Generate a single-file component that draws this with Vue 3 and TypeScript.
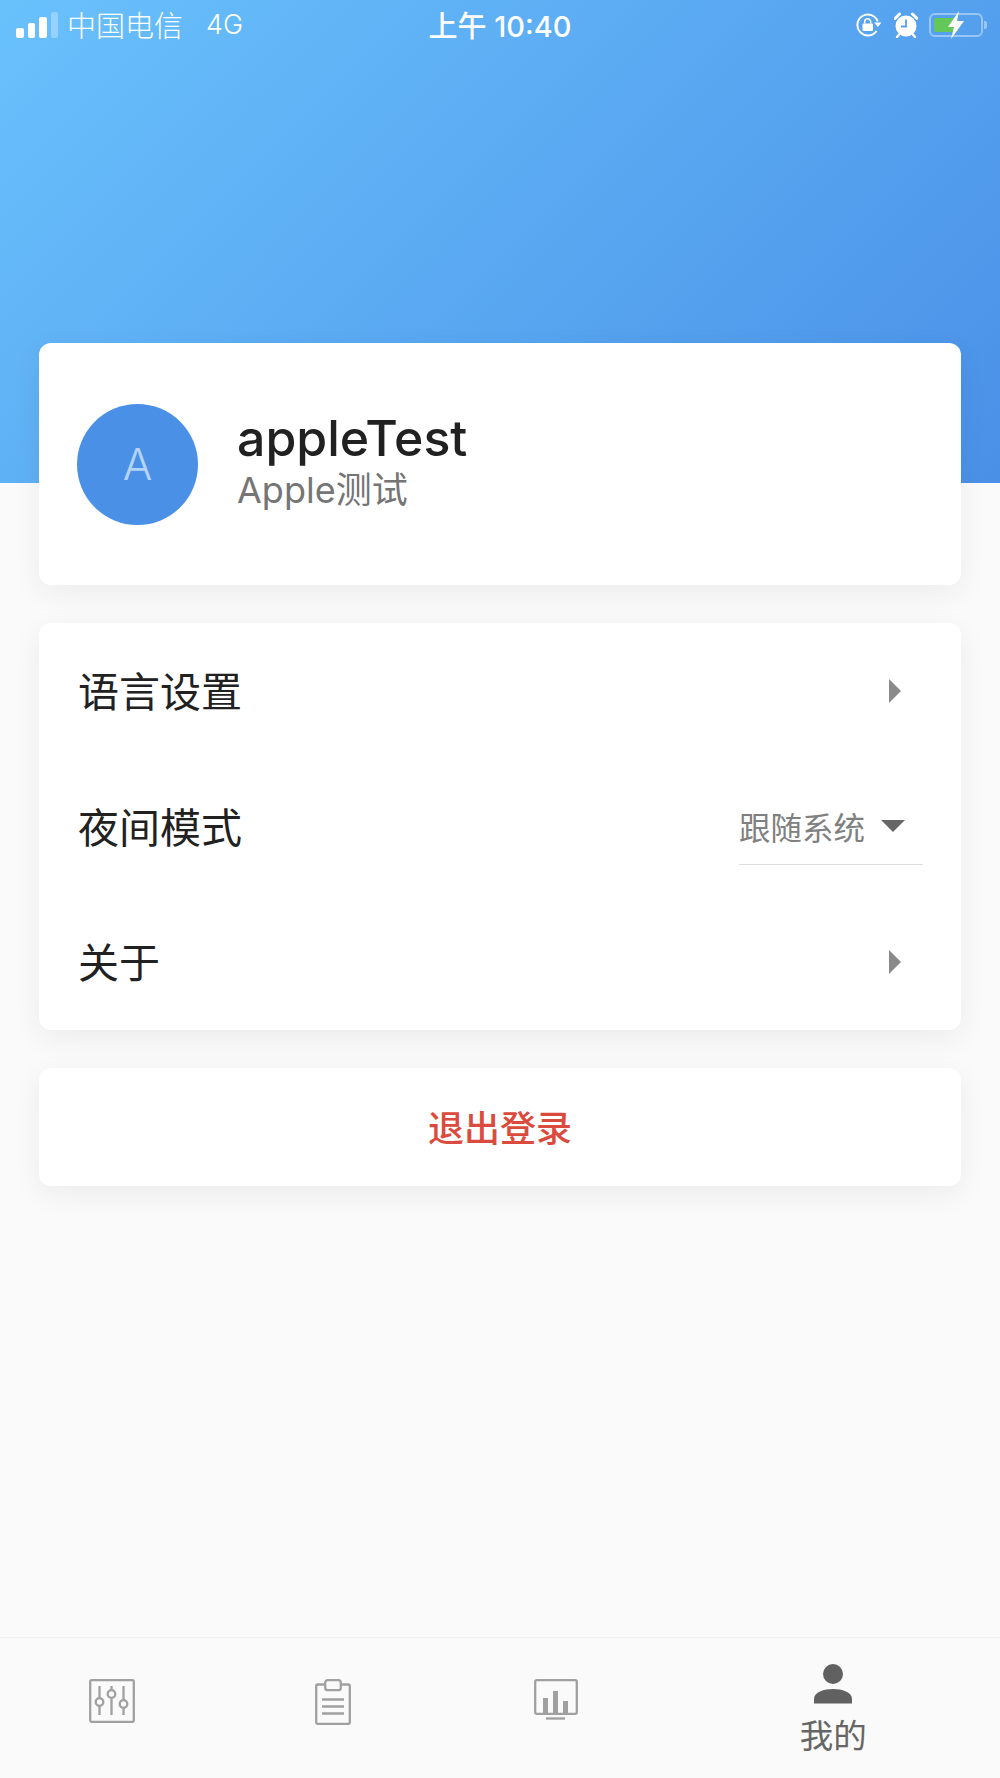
<template>
  <div class="page">
    <header class="hero">
      <div class="status-bar">
        <div class="status-left">
          <div class="signal">
            <i v-for="(h, idx) in signalBars" :key="h" :class="{ off: idx === 3 }" :style="{ height: h + 'px' }"></i>
          </div>
          <span class="carrier">中国电信</span>
          <span class="net">4G</span>
        </div>
        <div class="clock">上午 10:40</div>
        <div class="status-right">
          <svg class="ic-lock" width="26" height="24" viewBox="0 0 26 24">
            <path d="M20.500 18A10.500 10.500 0 1 1 21.800 8.500" fill="none" stroke="#fff" stroke-width="2" />
            <path d="M18 9.500h7.500l-3.700 4.500z" fill="#fff" />
            <rect x="6.500" y="10.500" width="10.500" height="7.500" rx="1" fill="#fff" />
            <path d="M8.700 10.500V8.800a3 3 0 0 1 6 0v1.700" fill="none" stroke="#fff" stroke-width="1.500" />
          </svg>
          <svg class="ic-alarm" width="24" height="26" viewBox="0 0 24 26">
            <circle cx="12" cy="14" r="10.500" fill="#fff" />
            <path d="M1 6.500L5.500 2M23 6.500L18.500 2" stroke="#fff" stroke-width="3" stroke-linecap="round" />
            <path d="M5 22.500l-2 2.500M19 22.500l2 2.500" stroke="#fff" stroke-width="2.400" stroke-linecap="round" />
            <path d="M12 7.500V14.500H7" fill="none" stroke="#5a9fec" stroke-width="1.800" />
          </svg>
          <div class="battery">
            <div class="battery-body"><div class="battery-level"></div></div>
            <div class="battery-nub"></div>
            <svg class="bolt" width="20" height="30" viewBox="0 0 20 30">
              <path d="M13 1L2 17h6l-3 12L18 11h-7z" fill="#fff" />
            </svg>
          </div>
        </div>
      </div>
    </header>

    <main class="content">
      <section class="card profile">
        <div class="avatar">A</div>
        <div class="profile-text">
          <div class="name">appleTest</div>
          <div class="subname">Apple测试</div>
        </div>
      </section>

      <section class="card settings">
        <div class="row">
          <span>语言设置</span>
          <span class="arrow-right"></span>
        </div>
        <div class="row">
          <span>夜间模式</span>
          <div class="select">
            <span>跟随系统</span>
            <span class="caret"></span>
          </div>
        </div>
        <div class="row">
          <span>关于</span>
          <span class="arrow-right"></span>
        </div>
      </section>

      <section class="card logout">退出登录</section>
    </main>

    <nav class="tabbar">
      <div class="tab">
        <svg class="ic-sliders" width="46" height="44" viewBox="0 0 46 44" fill="none" stroke="#a0a0a0" stroke-width="2.300">
          <rect x="1.200" y="1.200" width="43.600" height="41.600" rx="1.500" />
          <path d="M10.500 7v29M22.500 7v29M34.500 7v29" />
          <circle cx="10.500" cy="23" r="3.800" fill="#fafafa" />
          <circle cx="22.500" cy="15" r="3.800" fill="#fafafa" />
          <circle cx="34.500" cy="25" r="3.800" fill="#fafafa" />
        </svg>
      </div>
      <div class="tab">
        <svg width="36" height="46" viewBox="0 0 36 46" fill="none" stroke="#a0a0a0" stroke-width="2.300">
          <rect x="1.200" y="5.500" width="33.600" height="39.300" rx="1.500" />
          <rect x="10.200" y="1.200" width="15.600" height="10" rx="2.500" fill="#fafafa" />
          <path d="M7 20.500h22M7 27.500h22M7 34.500h22" />
        </svg>
      </div>
      <div class="tab">
        <svg width="44" height="42" viewBox="0 0 44 42" fill="none" stroke="#a0a0a0" stroke-width="2.300">
          <rect x="1.200" y="1.200" width="41.600" height="33.600" rx="1.500" />
          <path d="M11.500 34V19M21.500 34V12M31.500 34V22" stroke-width="5" />
          <path d="M12 39.500h19" />
        </svg>
      </div>
      <div class="tab tab-active">
        <svg width="40" height="40" viewBox="0 0 40 40" fill="#616161">
          <circle cx="20" cy="10" r="10" />
          <path d="M1 39.500v-4.500C1 28 11 25 20 25s19 3 19 10v4.500z" />
        </svg>
        <span class="tab-label">我的</span>
      </div>
    </nav>
  </div>
</template>

<script setup lang="ts">
const signalBars: number[] = [10, 15, 21, 26]
</script>

<style>
body {
  background: #fafafa;
}
</style>

<style scoped>
.page {
  display: flex;
  flex-direction: column;
  min-height: 1778px;
  background: #fafafa;
  font-family: Inter, "Noto Sans CJK SC", sans-serif;
  color: #212121;
}

.hero {
  height: 483px;
  background: linear-gradient(135deg, #69c1fc 0%, #4a90e7 100%);
}

.status-bar {
  display: flex;
  align-items: center;
  justify-content: space-between;
  position: relative;
  height: 48px;
  padding: 0 13px 0 16px;
  color: #fff;
}

.status-left,
.status-right {
  display: flex;
  align-items: center;
}

.signal {
  display: flex;
  align-items: flex-end;
  gap: 4px;
  height: 26px;
  margin-top: 2px;
}

.signal i {
  width: 7.500px;
  border-radius: 2px;
  background: #fff;
}

.signal i.off {
  background: rgba(255, 255, 255, 0.3);
}

.carrier {
  margin-left: 9px;
  font-size: 29px;
  font-weight: 300;
}

.net {
  margin-left: 23px;
  font-size: 27px;
  font-weight: 300;
}

.clock {
  position: absolute;
  left: 0;
  right: 0;
  text-align: center;
  font-size: 29px;
  font-weight: 500;
}

.status-right {
  position: relative;
  top: 1px;
}

.ic-lock {
  margin-right: 12px;
}

.ic-alarm {
  margin-right: 11px;
}

.battery {
  display: flex;
  align-items: center;
  position: relative;
}

.battery-body {
  width: 54px;
  height: 24px;
  padding: 3px;
  box-sizing: border-box;
  border: 2px solid rgba(255, 255, 255, 0.4);
  border-radius: 6px;
}

.battery-level {
  width: 24px;
  height: 100%;
  border-radius: 2px;
  background: #63c858;
}

.battery-nub {
  width: 3px;
  height: 8px;
  margin-left: 1px;
  background: rgba(255, 255, 255, 0.4);
  border-radius: 0 2px 2px 0;
}

.bolt {
  position: absolute;
  left: 17px;
  top: -3px;
}

.content {
  display: flex;
  flex-direction: column;
  gap: 38px;
  margin-top: -140px;
  padding: 0 39px;
}

.card {
  background: #fff;
  border-radius: 12px;
  box-shadow: 0 8px 30px rgba(0, 0, 0, 0.06);
}

.profile {
  display: flex;
  align-items: center;
  height: 242px;
  padding-left: 38px;
}

.avatar {
  display: flex;
  align-items: center;
  justify-content: center;
  width: 121px;
  height: 121px;
  border-radius: 50%;
  background: #4a90e7;
  color: #b3d4f7;
  font-size: 44px;
  font-weight: 300;
}

.profile-text {
  margin-left: 39px;
  margin-top: -5px;
}

.name {
  font-size: 50px;
  line-height: 56px;
  font-weight: 500;
  color: #212121;
}

.subname {
  font-size: 36px;
  line-height: 48px;
  color: #757575;
}

.settings {
  display: flex;
  flex-direction: column;
  height: 407px;
}

.row {
  display: flex;
  align-items: center;
  justify-content: space-between;
  flex: 1;
  padding: 0 38px 0 39px;
  font-size: 41px;
}

.row > span:first-child {
  position: relative;
  top: -2px;
}

.arrow-right {
  width: 0;
  height: 0;
  margin-right: 22px;
  border-top: 12px solid transparent;
  border-bottom: 12px solid transparent;
  border-left: 12px solid #8a8a8a;
}

.select {
  display: flex;
  align-items: center;
  justify-content: space-between;
  width: 184px;
  height: 76px;
  padding-right: 18px;
  box-sizing: border-box;
  border-bottom: 1.500px solid #dedede;
  font-size: 31.500px;
  color: #808080;
}

.caret {
  width: 0;
  height: 0;
  border-left: 12px solid transparent;
  border-right: 12px solid transparent;
  border-top: 12px solid #666;
}

.logout {
  display: flex;
  align-items: center;
  justify-content: center;
  height: 118px;
  padding-bottom: 2px;
  box-sizing: border-box;
  font-size: 36px;
  font-weight: 500;
  color: #db4b3d;
}

.tabbar {
  display: flex;
  margin-top: auto;
  height: 141px;
  border-top: 1px solid #efefef;
  box-sizing: border-box;
  background: #fafafa;
}

.tab {
  display: flex;
  flex-direction: column;
  align-items: center;
  flex: 1;
  padding-top: 41px;
}

.ic-sliders {
  margin-left: 2px;
}

.tab-active {
  flex: 1.500;
  padding-top: 26px;
}

.tab-label {
  margin-top: 10px;
  font-size: 33.500px;
  line-height: 44px;
  color: #666;
}
</style>
